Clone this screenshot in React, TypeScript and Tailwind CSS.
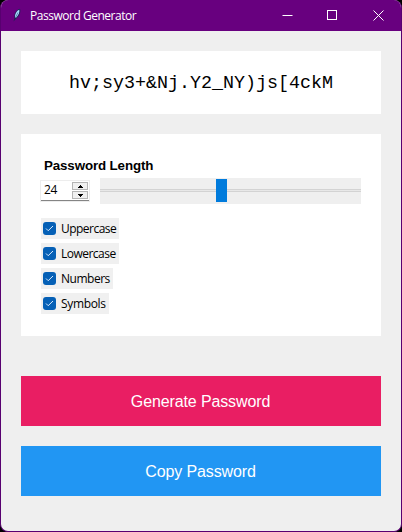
import { useState } from 'react';

const UI_FONT = "font-['Open_Sans','Noto_Sans',sans-serif]";

function TitleBar() {
  return (
    <header className={`flex h-[31px] shrink-0 items-center bg-[#68007f] text-white ${UI_FONT}`}>
      <svg className="mb-[2px] ml-[11px] h-[14px] w-[10px] shrink-0" viewBox="0 0 10 14">
        <path d="M1.500 13.500 2.500 10C2 6.500 3.500 2 8 .8c1 3-.3 7-3.500 9.500z" fill="#1b2555" />
        <path d="M3 9.500C2.800 6.500 4.200 3 7.300 1.800 7.700 4.200 6.600 7.200 4.300 9.400z" fill="#a8dcff" />
        <path d="M3.500 9.500 6 4.500" fill="none" stroke="#35558c" strokeWidth="0.600" />
      </svg>
      <h1 className="ml-[8px] text-[12px] leading-4 tracking-[-0.48px] whitespace-nowrap">Password Generator</h1>
      <div className="ml-auto flex">
        <button className="flex h-[31px] w-[46px] items-center justify-center" aria-label="Minimize">
          <svg width="11" height="11" viewBox="0 0 11 11" stroke="currentColor"><path d="M0.500 5.500h10" /></svg>
        </button>
        <button className="flex h-[31px] w-[45px] items-center justify-center" aria-label="Maximize">
          <svg width="11" height="11" viewBox="0 0 11 11" fill="none" stroke="currentColor"><rect x="0.500" y="0.500" width="9" height="9" /></svg>
        </button>
        <button className="flex h-[31px] w-[46px] items-center justify-center" aria-label="Close">
          <svg width="11" height="11" viewBox="0 0 11 11" stroke="currentColor"><path d="m0.500 0.500 10 10m0-10-10 10" /></svg>
        </button>
      </div>
    </header>
  );
}

function SpinArrow({ up = false }: { up?: boolean }) {
  return (
    <button className="flex h-[8px] w-[16px] items-center justify-center border border-[#b5b5b5] bg-[#f0f0f0]" aria-label={up ? 'Increase' : 'Decrease'}>
      <svg width="5" height="3" viewBox="0 0 5 3" shapeRendering="crispEdges"><path d={up ? 'M2 0h1v1h1v1h1v1H0V2h1V1h1z' : 'M0 0h5v1H4v1H3v1H2V2H1V1H0z'} fill="#000" /></svg>
    </button>
  );
}

function Option({ label, tracking }: { label: string; tracking: string }) {
  const [checked, setChecked] = useState(true);
  return (
    <button role="checkbox" aria-checked={checked} onClick={() => setChecked(!checked)} className={`flex h-[21px] items-center bg-[#f0f0f0] pr-[3px] pl-[2px] ${UI_FONT}`}>
      <span className="flex size-[13px] items-center justify-center rounded-[3px] bg-[#0560b6]">
        {checked && <svg width="9" height="9" viewBox="0 0 9 9" fill="none" stroke="#d8eaff" strokeWidth="1"><path d="m1 4.500 2.200 2.200L8 2" /></svg>}
      </span>
      <span className={`ml-[5px] text-[12px] leading-4 text-black ${tracking}`}>{label}</span>
    </button>
  );
}

export default function App() {
  return (
    <div className="h-[532px] w-[402px] bg-black">
      <main className="flex h-full w-full flex-col overflow-hidden rounded-[8px] border border-t-0 border-[#580070] bg-[#efefef]">
        <TitleBar />
        <div className="flex flex-1 flex-col px-[20px] pt-[20px]">
          <section className="flex h-[63px] items-center justify-center bg-white pt-[2px]">
            <output className="font-['Liberation_Mono',monospace] text-[18.33px] leading-6 whitespace-nowrap text-black">{'hv;sy3+&Nj.Y2_NY)js[4ckM'}</output>
          </section>
          <section className="mt-[20px] h-[202px] bg-white px-[20px] pt-[22px]">
            <h2 className="ml-[3px] font-['Liberation_Sans',Arial,sans-serif] text-[13.33px] leading-[20px] font-bold tracking-[-0.12px] text-black">Password Length</h2>
            <div className="mt-[2px] flex items-start">
              <div className="mt-[3px] flex h-[20px] w-[48px] items-center justify-between border-b border-[#858585] bg-white pr-[1px] pl-[3px] shadow-[0_0_0_1px_#ededed]">
                <span className={`mb-[2px] text-[12px] leading-4 tracking-[-0.4px] text-black ${UI_FONT}`}>24</span>
                <div className="flex flex-col gap-px"><SpinArrow up /><SpinArrow /></div>
              </div>
              <div className="ml-[11px] flex h-[26px] flex-1 items-center bg-[#efefef] pb-px">
                <div className="h-[3px] w-[116px] border-y border-[#d3d3d3] bg-[#e8e8e8]" />
                <div className="h-[23px] w-[11px] bg-[#007bdc]" />
                <div className="h-[3px] flex-1 border-y border-[#d3d3d3] bg-[#e8e8e8]" />
              </div>
            </div>
            <div className="mt-[14px] flex flex-col items-start gap-[4px]">
              <Option label="Uppercase" tracking="tracking-[-0.52px]" />
              <Option label="Lowercase" tracking="tracking-[-0.52px]" />
              <Option label="Numbers" tracking="tracking-[-0.48px]" />
              <Option label="Symbols" tracking="tracking-[-0.35px]" />
            </div>
          </section>
          <div className="mt-[40px] flex flex-col gap-[20px] font-['Liberation_Sans',Arial,sans-serif] text-[16px] tracking-[-0.12px] text-white">
            <button className="h-[50px] bg-[#e91e63] pt-[2px] pr-px">Generate Password</button>
            <button className="h-[50px] bg-[#2196f3] pt-[2px] pr-px">Copy Password</button>
          </div>
        </div>
      </main>
    </div>
  );
}
